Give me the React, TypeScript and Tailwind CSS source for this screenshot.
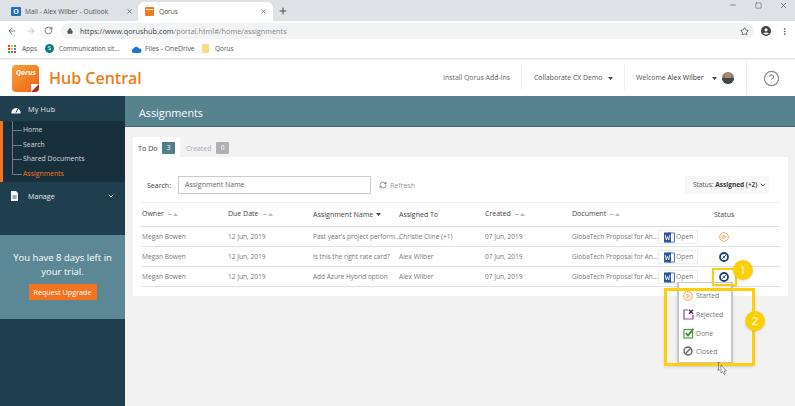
import React from "react";
import { ArrowLeft, ArrowRight, RotateCw, Lock, Star, MoreVertical, X, Plus, Minus, Square, ChevronDown, RefreshCw, CircleHelp } from "lucide-react";

const font = { fontFamily: '"Open Sans", sans-serif' };

function Sort() {
  return <span className="ml-[4px] inline-flex items-center gap-[1px]"><span className="w-[4px] h-[1px] bg-[#bbb]" /><svg width="5" height="3"><path d="M0 3 L2.5 0 L5 3Z" fill="#bbb" /></svg></span>;
}
function Caret() {
  return <svg width="5" height="3" className="inline-block"><path d="M0 0 H5 L2.5 3Z" fill="#444" /></svg>;
}
function WordBtn() {
  return (
    <div className="absolute left-[658px] w-[40px] h-[14px] -mt-[7px] border border-[#eee] flex items-center pl-[5px] text-[6.8px] text-[#777] bg-white">
      <svg width="11" height="11" viewBox="0 0 11 11"><rect x="4" y="1" width="6.5" height="9" fill="#fff" stroke="#2b579a" strokeWidth="0.8" /><rect x="0" y="0.5" width="7" height="10" fill="#2b579a" /><path d="M1.2 3 L2.3 8 L3.5 4.5 L4.7 8 L5.8 3" stroke="#fff" strokeWidth="0.8" fill="none" /></svg>
      <span className="ml-[1px]">Open</span>
    </div>
  );
}
function Dial({ x, y, size = 10 }: { x: number; y: number; size?: number }) {
  return (
    <svg width={size} height={size} viewBox="0 0 10 10" className="absolute" style={{ left: x, top: y }}>
      <circle cx="5" cy="5" r="4" fill="#fff" stroke="#1d3f7a" strokeWidth="1.8" />
      <path d="M3.4 6.6 L6.8 3.2" stroke="#1d3f7a" strokeWidth="1" />
      <circle cx="5" cy="5" r="0.9" fill="#1d3f7a" />
    </svg>
  );
}
function Started({ x, y, size = 10 }: { x: number; y: number; size?: number }) {
  return (
    <svg width={size} height={size} viewBox="0 0 10 10" className="absolute" style={{ left: x, top: y }}>
      <circle cx="5" cy="5" r="4.3" fill="none" stroke="#f6a65a" strokeWidth="1" />
      <path d="M3.8 2.9 L7 5 L3.8 7.1Z" fill="#fbd9b6" stroke="#f6a65a" strokeWidth="0.7" />
    </svg>
  );
}
const rows = [
  { y: 237, name: "Past year's project perform...", to: "Christie Cline (+1)", started: true },
  { y: 257, name: "Is this the right rate card?", to: "Alex Wilber", started: false },
  { y: 277, name: "Add Azure Hybrid option", to: "Alex Wilber", started: false },
];

export default function App() {
  return (
    <div className="relative w-[795px] h-[406px] overflow-hidden bg-[#f2f2f2] text-[#555]" style={font}>
      {/* Tab strip */}
      <div className="absolute left-0 top-0 w-full h-[21px] bg-[#dee1e6]">
        <div className="absolute left-[11px] top-[7px] w-[10px] h-[9px] rounded-[1px] bg-[#1f6fc4] text-white text-[7px] leading-[9px] text-center font-bold">O</div>
        <span className="absolute left-[25px] top-[4px] text-[6.6px] leading-[15px] text-[#555] whitespace-nowrap">Mail - Alex Wilber - Outlook</span>
        <X size={7} strokeWidth={2} className="absolute left-[126px] top-[8px] text-[#444]" />
        <div className="absolute left-[138px] top-[2px] w-[135px] h-[19px] rounded-t-[6px] bg-white" />
        <div className="absolute left-[145px] top-[7px] w-[9px] h-[9px] rounded-[1px] bg-[#f07c22]"><div className="mt-[2px] mx-[1px] h-[1px] bg-white" /></div>
        <span className="absolute left-[159px] top-[4px] text-[6.6px] leading-[15px] text-[#555]">Qorus</span>
        <X size={7} strokeWidth={2} className="absolute left-[260px] top-[8px] text-[#444]" />
        <Plus size={10} strokeWidth={2} className="absolute left-[278px] top-[6px] text-[#333]" />
        <Minus size={8} strokeWidth={1.5} className="absolute left-[729px] top-[1px] text-[#333]" />
        <Square size={7} strokeWidth={1.5} className="absolute left-[755px] top-[2px] text-[#333]" />
        <X size={9} strokeWidth={1.5} className="absolute left-[779px] top-[1px] text-[#333]" />
      </div>
      {/* URL bar */}
      <div className="absolute left-0 top-[21px] w-full h-[18px] bg-white">
        <ArrowLeft size={10} className="absolute left-[7px] top-[5px] text-[#666]" />
        <ArrowRight size={10} className="absolute left-[26px] top-[5px] text-[#bbb]" />
        <RotateCw size={9} className="absolute left-[44px] top-[5px] text-[#555]" />
        <div className="absolute left-[61px] top-[2px] w-[693px] h-[16px] rounded-full bg-[#f1f3f4]" />
        <Lock size={6} className="absolute left-[67px] top-[7px] text-[#555]" fill="#555" />
        <span className="absolute left-[80px] top-[2px] text-[7.3px] leading-[16px] text-[#888] whitespace-nowrap"><span className="text-[#444]">https://www.qorushub.com</span>/portal.html#/home/assignments</span>
        <Star size={9} className="absolute left-[740px] top-[6px] text-[#444]" />
        <svg width="10" height="10" viewBox="0 0 10 10" className="absolute left-[761px] top-[5px]"><circle cx="5" cy="5" r="5" fill="#444" /><circle cx="5" cy="3.8" r="1.6" fill="#fff" /><path d="M2 7.6 Q5 5.2 8 7.6 Q5 9.6 2 7.6Z" fill="#fff" /></svg>
        <MoreVertical size={9} className="absolute left-[780px] top-[6px] text-[#444]" />
      </div>
      {/* Bookmarks */}
      <div className="absolute left-0 top-[39px] w-full h-[20px] bg-white border-b border-[#e4e4e4]">
        <div className="absolute left-[8px] top-[6px] grid grid-cols-3 gap-[1px]">
          {["#e33","#fb0","#3a5","#e33","#fb0","#38e","#3a5","#38e","#e33"].map((c, i) => <span key={i} className="w-[2px] h-[2px]" style={{ background: c }} />)}
        </div>
        <span className="absolute left-[22px] top-[2px] text-[6.5px] leading-[15px] text-[#555]">Apps</span>
        <div className="absolute left-[45px] top-[5px] w-[9px] h-[9px] rounded-full bg-[#0f7c82] text-white text-[6px] leading-[9px] text-center">S</div>
        <span className="absolute left-[59px] top-[2px] text-[6.3px] leading-[15px] text-[#555] whitespace-nowrap">Communication sit...</span>
        <svg width="11" height="7" viewBox="0 0 11 7" className="absolute left-[131px] top-[7px]"><path d="M2.5 7 A2.3 2.3 0 0 1 2.5 2.6 A3 3 0 0 1 8 2.6 A2.2 2.2 0 0 1 8.6 7Z" fill="#1b76d2" /></svg>
        <span className="absolute left-[145px] top-[2px] text-[6.8px] leading-[15px] text-[#555] whitespace-nowrap">Files - OneDrive</span>
        <div className="absolute left-[202px] top-[5px] w-[7px] h-[9px] bg-[#f7dd85]" />
        <span className="absolute left-[215px] top-[2px] text-[6.5px] leading-[15px] text-[#555]">Qorus</span>
      </div>
      {/* App header */}
      <div className="absolute left-0 top-[60px] w-full h-[36px] bg-white">
        <div className="absolute left-[12px] top-[5px] w-[27px] h-[27px] rounded-[4px] bg-gradient-to-br from-[#f9a13a] to-[#ec5f12] overflow-hidden">
          <span className="absolute left-[4px] top-[3px] text-[7px] italic font-bold leading-[10px] text-white">Qorus</span>
          <div className="absolute right-0 bottom-0 w-[8px] h-[8px] bg-white" />
          <svg width="8" height="8" className="absolute right-0 bottom-0"><path d="M8 0 V8 H0Z" fill="#a8331a" /></svg>
        </div>
        <span className="absolute left-[49px] top-[6px] text-[16px] leading-[24px] font-semibold text-[#e8801a] whitespace-nowrap">Hub Central</span>
        <span className="absolute left-[443px] top-[10px] text-[6.9px] leading-[16px] text-[#666] whitespace-nowrap">Install Qorus Add-Ins</span>
        <div className="absolute left-[521px] top-[5px] w-px h-[25px] bg-[#f0f0f0]" />
        <span className="absolute left-[534px] top-[10px] text-[6.9px] leading-[16px] text-[#555] whitespace-nowrap">Collaborate CX Demo</span>
        <span className="absolute left-[608px] top-[17px] leading-[0]"><Caret /></span>
        <div className="absolute left-[624px] top-[5px] w-px h-[25px] bg-[#f0f0f0]" />
        <span className="absolute left-[636px] top-[10px] text-[6.9px] leading-[16px] text-[#555] whitespace-nowrap">Welcome <span className="text-[#333]">Alex Wilber</span></span>
        <span className="absolute left-[712px] top-[17px] leading-[0]"><Caret /></span>
        <div className="absolute left-[722px] top-[12px] w-[12px] h-[12px] rounded-full bg-[#8b7d6b] overflow-hidden"><div className="absolute left-[3px] top-0 w-[6px] h-[6px] rounded-full bg-[#b08a68]" /><div className="absolute left-0 top-[6px] w-[12px] h-[6px] bg-[#3e4a4f]" /></div>
        <div className="absolute left-[746px] top-0 w-px h-[36px] bg-[#f0f0f0]" />
        <CircleHelp size={17} strokeWidth={1.6} className="absolute left-[763px] top-[10px] text-[#888]" />
      </div>
      {/* Sidebar */}
      <aside className="absolute left-0 top-[96px] w-[125px] h-[310px] bg-[#1f3f4e]">
        <svg width="10" height="8" viewBox="0 0 10 8" className="absolute left-[10.5px] top-[9.5px]"><path d="M0.5 7.5 A4.6 4.6 0 1 1 9.5 7.5Z" fill="#f4f4f4" /><path d="M5 6.5 L7 2.5" stroke="#1f3f4e" strokeWidth="1" /></svg>
        <span className="absolute left-[28px] top-[5px] text-[7.2px] leading-[16px] tracking-[0.2px] text-[#e6e6e6]">My Hub</span>
        <div className="absolute left-0 top-[25px] w-full h-[61px] bg-[#18303c]">
          <div className="absolute left-0 top-0 w-[3px] h-full bg-[#f47320]" />
          <div className="absolute left-[12px] top-0 w-px h-[53px] bg-[#6a7f88]" />
          {[
            ["Home", 8, "#d4dbde"],
            ["Search", 23, "#d4dbde"],
            ["Shared Documents", 37, "#d4dbde"],
            ["Assignments", 52, "#f47320"],
          ].map(([t, y, c]) => (
            <React.Fragment key={t as string}>
              <div className="absolute left-[12px] w-[10px] h-px bg-[#6a7f88]" style={{ top: (y as number) + 1 }} />
              <span className="absolute left-[23px] text-[6.9px] leading-[14px] whitespace-nowrap -mt-[7px]" style={{ top: (y as number) + 1, color: c as string }}>{t}</span>
            </React.Fragment>
          ))}
        </div>
        <svg width="7" height="10" viewBox="0 0 7 10" className="absolute left-[11px] top-[95px]"><path d="M0 0 H5 L7 2 V10 H0Z" fill="#f4f4f4" /><path d="M1.5 5 H5.5 M1.5 7 H5.5" stroke="#1f3f4e" strokeWidth="0.8" /></svg>
        <span className="absolute left-[28px] top-[92px] text-[7.2px] leading-[16px] text-[#e6e6e6]">Manage</span>
        <ChevronDown size={8} strokeWidth={3} className="absolute left-[107px] top-[96px] text-white" />
        <div className="absolute left-0 top-[139px] w-full h-[84px] bg-[#5c8895] flex flex-col items-center">
          <div className="mt-[16px] w-[115px] text-center text-[9.5px] leading-[14px] font-medium text-white">You have 8 days left in your trial.</div>
          <div className="mt-[5px] h-[16px] w-[68px] bg-[#f47320] text-white text-[7.2px] leading-[16px] text-center whitespace-nowrap">Request Upgrade</div>
        </div>
      </aside>
      {/* Title band */}
      <div className="absolute left-[125px] top-[96px] w-[670px] h-[31px] bg-[#57838f] border-b border-[#3f6470] text-white text-[10.8px] leading-[34px] pl-[14px]">Assignments</div>
      {/* Tabs */}
      <div className="absolute left-[133px] top-[137px] w-[47px] h-[20px] bg-white" />
      <span className="absolute left-[138px] top-[142px] text-[7.2px] leading-[13px] text-[#444]">To Do</span>
      <div className="absolute left-[162px] top-[142px] w-[13px] h-[12px] rounded-[1px] bg-[#4f7f8c] text-white text-[6.5px] leading-[12px] text-center">3</div>
      <span className="absolute left-[186px] top-[142px] text-[6.9px] leading-[13px] text-[#a3a8c0]">Created</span>
      <div className="absolute left-[216px] top-[142px] w-[13px] h-[12px] rounded-[1px] bg-[#b0b0b0] text-white text-[6.5px] leading-[12px] text-center">0</div>
      {/* Card */}
      <div className="absolute left-[133px] top-[157px] w-[655px] h-[139px] bg-white" />
      <span className="absolute left-[147px] top-[179px] text-[7px] leading-[13px] text-[#444]">Search:</span>
      <div className="absolute left-[178px] top-[176px] w-[193px] h-[18px] border border-[#ccc] bg-white pl-[6px] text-[7px] leading-[16px] text-[#666]">Assignment Name</div>
      <RefreshCw size={8} className="absolute left-[379px] top-[181px] text-[#666]" />
      <span className="absolute left-[390px] top-[179px] text-[7px] leading-[13px] text-[#999]">Refresh</span>
      <div className="absolute left-[685px] top-[176px] w-[84px] h-[18px] bg-[#f7f7f7] text-[6.5px] leading-[18px] pl-[8px] text-[#555] whitespace-nowrap">Status: <b className="text-[#333]">Assigned</b> <b className="font-semibold text-[#333]">(+2)</b></div>
      <ChevronDown size={8} strokeWidth={2} className="absolute left-[759px] top-[181px] text-[#333]" />
      <div className="absolute left-[141px] top-[202px] w-[639px] border-t border-dotted border-[#ddd]" />
      {/* Table header */}
      {[
        ["Owner", 142],
        ["Due Date", 228],
        ["Created", 485],
        ["Document", 572],
      ].map(([t, x]) => (
        <span key={t as string} className="absolute top-[207px] text-[7px] leading-[14px] text-[#444] whitespace-nowrap flex items-center" style={{ left: x as number }}>{t}<Sort /></span>
      ))}
      <span className="absolute left-[313px] top-[207px] text-[7.1px] leading-[14px] text-[#444] whitespace-nowrap flex items-center gap-[3px]">Assignment Name <Caret /></span>
      <span className="absolute left-[399px] top-[208px] text-[7px] leading-[14px] text-[#444] whitespace-nowrap">Assigned To</span>
      <span className="absolute left-[714px] top-[208px] text-[7px] leading-[14px] text-[#444]">Status</span>
      <div className="absolute left-[141px] top-[226px] w-[639px] h-px bg-[#ddd]" />
      {rows.map((r) => (
        <React.Fragment key={r.y}>
          <span className="absolute left-[142px] text-[6.6px] leading-[12px] -mt-[6px] text-[#777]" style={{ top: r.y }}>Megan Bowen</span>
          <span className="absolute left-[228px] text-[6.6px] leading-[12px] -mt-[6px] text-[#777]" style={{ top: r.y }}>12 Jun, 2019</span>
          <span className="absolute left-[313px] text-[6.5px] leading-[12px] -mt-[6px] text-[#777] whitespace-nowrap" style={{ top: r.y }}>{r.name}</span>
          <span className="absolute left-[399px] text-[6.6px] leading-[12px] -mt-[6px] text-[#777] whitespace-nowrap" style={{ top: r.y }}>{r.to}</span>
          <span className="absolute left-[485px] text-[6.6px] leading-[12px] -mt-[6px] text-[#777]" style={{ top: r.y }}>07 Jun, 2019</span>
          <span className="absolute left-[572px] text-[6.5px] leading-[12px] -mt-[6px] text-[#777] whitespace-nowrap" style={{ top: r.y }}>GlobaTech Proposal for An...</span>
          <div className="absolute" style={{ top: r.y, left: 0 }}><WordBtn /></div>
          <div className="absolute left-[141px] w-[639px] h-px bg-[#e2e2e2]" style={{ top: r.y + 9 }} />
          {r.started ? <Started x={719} y={r.y - 5} /> : <Dial x={719} y={r.y - 5} />}
        </React.Fragment>
      ))}
      {/* Dropdown */}
      <div className="absolute left-[677px] top-[282px] w-[56px] h-[82px] bg-white border-x-2 border-b-2 border-t border-[#c8c8c8] shadow" />
      <Started x={683} y={291} />
      <span className="absolute left-[696px] top-[289px] text-[6.8px] leading-[13px] text-[#777]">Started</span>
      <svg width="11" height="11" viewBox="0 0 11 11" className="absolute left-[683px] top-[309px]"><path d="M5 1 H1 V10 H10 V6" fill="none" stroke="#8a4a8f" strokeWidth="1.2" /><path d="M6 0.8 L10 4.8 M10 0.8 L6 4.8" stroke="#5a2a5f" strokeWidth="1.6" /></svg>
      <span className="absolute left-[696px] top-[308px] text-[6.8px] leading-[13px] text-[#777]">Rejected</span>
      <svg width="11" height="11" viewBox="0 0 11 11" className="absolute left-[683px] top-[328px]"><rect x="1" y="1.5" width="8.5" height="8.5" fill="#fff" stroke="#5a9a4f" strokeWidth="1.2" /><path d="M2.8 5 L5 7.6 L10.4 0.8" fill="none" stroke="#3c8c3a" strokeWidth="1.8" /></svg>
      <span className="absolute left-[696px] top-[327px] text-[6.8px] leading-[13px] text-[#777]">Done</span>
      <svg width="10" height="10" viewBox="0 0 10 10" className="absolute left-[683px] top-[346px]"><circle cx="5" cy="5" r="4" fill="none" stroke="#666" strokeWidth="1.4" /><path d="M2.2 7.8 L7.8 2.2" stroke="#666" strokeWidth="1.3" /></svg>
      <span className="absolute left-[696px] top-[345px] text-[6.8px] leading-[13px] text-[#777]">Closed</span>
      {/* Callouts */}
      <div className="absolute left-[712px] top-[268px] w-[25px] h-[18px] border-[2.5px] border-[#fdcf0a] shadow-sm" />
      <div className="absolute left-[664px] top-[288px] w-[91px] h-[78px] border-[3px] border-[#fdcf0a] shadow-sm" />
      <div className="absolute left-[733px] top-[260px] w-[20px] h-[20px] rounded-full bg-[#fdcf0a] text-white text-[11px] leading-[20px] text-center shadow-sm">1</div>
      <div className="absolute left-[745px] top-[311px] w-[20px] h-[20px] rounded-full bg-[#fdcf0a] text-white text-[11px] leading-[20px] text-center shadow-sm">2</div>
      {/* Cursor */}
      <svg width="10" height="13" viewBox="0 0 10 13" className="absolute left-[717px] top-[362px]"><path d="M1.5 0 V8 M0 0 H3 M0 8 H3" stroke="#555" strokeWidth="0.6" /><path d="M4 3 V11 L5.5 9.5 L7 12.5 L8.2 12 L7 9 H9.5Z" fill="#fff" stroke="#555" strokeWidth="0.6" /></svg>
    </div>
  );
}
